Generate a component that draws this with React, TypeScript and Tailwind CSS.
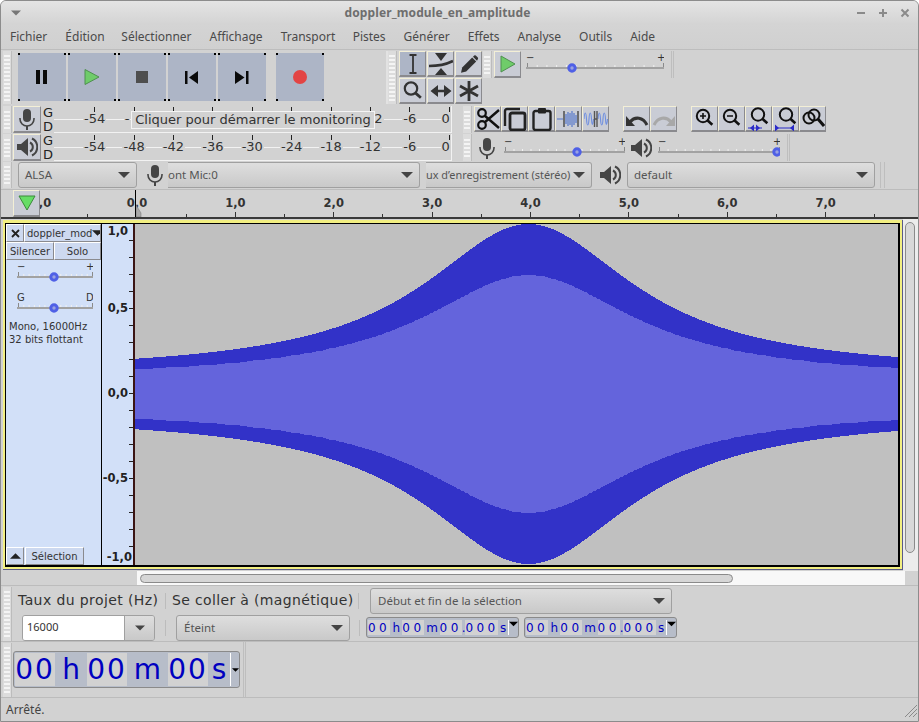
import React from "react";

const DJ = "font-['DejaVu_Sans',sans-serif]";

function Grip({ h, className = "" }: { h: number; className?: string }) {
  return (
    <div className={`w-[9px] shrink-0 flex flex-col justify-center gap-[2px] items-center bg-[#dcdcdc] border-r border-[#bcbcbc] overflow-hidden ${className}`} style={{ height: h }}>
      {Array.from({ length: Math.floor(h / 4) - 1 }).map((_, i) => (
        <div key={i} className="w-[6px] h-[2px] bg-[#f4f4f4]" />
      ))}
    </div>
  );
}

function Corners() {
  const c = "absolute w-[2px] h-[2px] bg-black";
  return (
    <>
      <span className={`${c} left-0 top-0`} />
      <span className={`${c} right-0 top-0`} />
      <span className={`${c} left-0 bottom-0`} />
      <span className={`${c} right-0 bottom-0`} />
    </>
  );
}

function BigBtn({ children, ml = "" }: { children: React.ReactNode; ml?: string }) {
  return (
    <div className={`relative w-[48px] h-[48px] shrink-0 bg-[#adb5c6] flex items-center justify-center ${ml}`}>
      <Corners />
      {children}
    </div>
  );
}

function ToolBtn({ children, active, w = 27, h = 26 }: { children: React.ReactNode; active?: boolean; w?: number; h?: number }) {
  return (
    <div
      className={`shrink-0 flex items-center justify-center border-t border-l border-b-2 border-r border-t-[#f3efd6] border-l-[#f3efd6] border-b-[#8a8a8e] border-r-[#8a8a8e] ${active ? "bg-[#adb5c6]" : "bg-[#c9ccd5]"}`}
      style={{ width: w, height: h }}
    >
      {children}
    </div>
  );
}

function Mic({ s = 22, c = "#454545" }: { s?: number; c?: string }) {
  return (
    <svg width={s} height={s} viewBox="0 0 22 22">
      <rect x="7" y="1" width="8" height="13" rx="4" fill={c} />
      <path d="M4 10v1a7 7 0 0 0 14 0v-1" fill="none" stroke={c} strokeWidth="1.6" />
      <path d="M11 18v4" stroke={c} strokeWidth="2" />
    </svg>
  );
}

function Speaker({ s = 20, c = "#454545" }: { s?: number; c?: string }) {
  return (
    <svg width={s} height={s} viewBox="0 0 22 22">
      <path d="M1 8h4l7-6v18l-7-6H1z" fill={c} />
      <path d="M14 6.5a5 5 0 0 1 0 9" fill="none" stroke={c} strokeWidth="2" />
      <path d="M16 2.5a9.5 9.5 0 0 1 0 17" fill="none" stroke={c} strokeWidth="2" />
    </svg>
  );
}

function Slider({ w, pos, left = "−", right = "+", color = "#333" }: { w: number; pos: number; left?: string; right?: string; color?: string }) {
  const ticks = Array.from({ length: 15 }).map((_, i) => 1 + ((w - 2) * i) / 14);
  return (
    <svg width={w} height={22} viewBox={`0 0 ${w} 22`} className="shrink-0">
      <text x="0" y="8" fontFamily="DejaVu Sans" fontSize="10" fill={color}>{left}</text>
      <text x={w - 7} y="8" fontFamily="DejaVu Sans" fontSize="10" fill={color}>{right}</text>
      {ticks.map((t, i) => (
        <rect key={i} x={t} y={i === 0 || i === 14 ? 10 : 12} width="1" height={i === 0 || i === 14 ? 4 : 2} fill={i === 0 || i === 14 ? "#8a8a8a" : "#f2f2f2"} />
      ))}
      <rect x="0" y="14" width={w} height="2" fill="#a2a2a2" />
      <circle cx={pos} cy="15" r="3.2" fill="#9aa2e0" stroke="#4f60e6" strokeWidth="3" />
    </svg>
  );
}

function Caret({ c = "#444", w = 12 }: { c?: string; w?: number }) {
  return (
    <svg width={w} height={6} viewBox="0 0 12 6" className="shrink-0">
      <path d="M0 0h12L6 6z" fill={c} />
    </svg>
  );
}

function Combo({ w, text, h = 26, cls = "", tx = 6 }: { w: number; text: string; h?: number; cls?: string; tx?: number }) {
  return (
    <div
      className={`shrink-0 flex items-center justify-between pr-[6px] border border-[#a0a0a0] rounded-[3px] bg-gradient-to-b from-[#dedede] to-[#c9c9c9] text-[#555] font-['Noto_Sans',sans-serif] overflow-hidden ${cls || ""} ${cls.includes("text-[") ? "" : "text-[11.5px]"}`}
      style={{ width: w, height: h, paddingLeft: tx }}
    >
      <span className="whitespace-nowrap">{text}</span>
      <Caret />
    </div>
  );
}

function MeterRow({ icon, mask }: { icon: React.ReactNode; mask?: boolean }) {
  const labels = mask
    ? ["-54", "-", "", "", "", "", "", "2", "-6", "0"]
    : ["-54", "-48", "-42", "-36", "-30", "-24", "-18", "-12", "-6", "0"];
  return (
    <div className="flex h-[27px] items-stretch pl-[2px]">
      <Grip h={27} />
      <div className="ml-[1px]">
        <ToolBtn w={28} h={27}>{icon}</ToolBtn>
      </div>
      <div className={`w-[13px] ml-[2px] flex flex-col text-[13px] leading-[13.5px] text-[#222] ${DJ}`}>
        <span>G</span>
        <span>D</span>
      </div>
      <div className="relative w-[398px] h-[27px] ml-[-2px]">
        <div className="absolute left-0 right-0 top-[13px] h-[1px] bg-[#f2f2f2]" />
        <div className="absolute left-0 right-0 top-[26px] h-[1px] bg-[#f2f2f2]" />
        <div className="absolute right-0 top-0 bottom-0 w-[1px] bg-[#f2f2f2]" />
        <div className={`relative flex ml-[21px] pt-[1px] text-[13px] text-[#333] ${DJ}`}>
          {labels.map((l, n) => (
            <div key={n} className="w-[39.4px] shrink-0 flex flex-col items-center">
              <span className="w-[1px] h-[5px] bg-[#222] shrink-0" />
              <span
                className={`leading-[14px] px-[1px] bg-[#d2d2d2] ${l === "0" ? "mr-[7px]" : ""} ${l === "-" ? "mr-[14px]" : ""} ${l === "2" ? "ml-[16px]" : ""}`}
              >
                {l}
              </span>
            </div>
          ))}
        </div>
        {mask && (
          <div className={`absolute left-[77px] top-[5px] w-[244px] h-[18px] bg-[#d2d2d2] border border-[#f4f4f4] text-[13px] leading-[16px] text-[#333] whitespace-nowrap text-center ${DJ}`}>
            Cliquer pour démarrer le monitoring
          </div>
        )}
      </div>
    </div>
  );
}

function Timer({ small, w }: { small?: boolean; w: number }) {
  const D = ({ t }: { t: string }) => (
    <span className={`bg-[#d2d2d2] flex items-center justify-center h-full ${small ? "w-[22px] tracking-[3.4px]" : "w-[40px] tracking-[2px]"}`}>{t}</span>
  );
  const U = ({ t, wd }: { t: string; wd: number }) => (
    <span className="flex items-end justify-center h-full" style={{ width: wd }}>{t}</span>
  );
  return (
    <div
      className={`flex items-stretch shrink-0 bg-[#b7bdc9] border border-[#8a8a8a] rounded-[3px] text-[#0000c0] overflow-hidden ${DJ} ${small ? "h-[21px] text-[12px] leading-[14px] py-[2px] pl-[1px]" : "h-[37px] text-[28px] leading-[32px] py-[1px] pl-[1px]"}`}
      style={{ width: w }}
    >
      {small ? (
        <>
          <D t="00" /><U t="h" wd={13} /><D t="00" /><U t="m" wd={16} /><D t="00" />
          <span className="flex items-center justify-center w-[4px]">.</span>
          <span className="bg-[#d2d2d2] flex items-center justify-center w-[33px] tracking-[3.4px]">000</span>
          <U t="s" wd={10} />
        </>
      ) : (
        <>
          <D t="00" /><U t="h" wd={32} /><D t="00" /><U t="m" wd={41} /><D t="00" /><U t="s" wd={22} />
        </>
      )}
      <span className={`flex-1 bg-[#b7bdc9] border-l border-white flex justify-center ${small ? "pt-[1px]" : "pt-[14px]"}`}>
        <Caret c="#000" w={small ? 9 : 7} />
      </span>
    </div>
  );
}

function Ic({ children }: { children: React.ReactNode }) {
  return <svg width="24" height="24" viewBox="0 0 24 24" fill="none">{children}</svg>;
}

function Lens({ cx = 10, cy = 9, r = 6, c = "#111", sw = 2, hl = 5 }: { cx?: number; cy?: number; r?: number; c?: string; sw?: number; hl?: number }) {
  return (
    <>
      <circle cx={cx} cy={cy} r={r} stroke={c} strokeWidth={sw} />
      <path d={`M${cx + r * 0.7} ${cy + r * 0.7}L${cx + r * 0.7 + hl} ${cy + r * 0.7 + hl * 0.9}`} stroke={c} strokeWidth={sw + 0.6} />
    </>
  );
}

function wavePaths() {
  const W = 763, cy = 170;
  const xs: number[] = [];
  for (let x = 0; x <= W; x += 1) xs.push(x);
  const outer = (x: number) => {
    const dt = (x - 393) / 98.4;
    return Math.round(21 + 149 / (1 + (dt / 1.3) ** 2));
  };
  const inner = (x: number) => Math.round(outer(x) * 0.7);
  const mk = (f: (x: number) => number) =>
    "M" + xs.map((x) => `${x} ${cy - f(x)}`).join("L") + "L" + xs.slice().reverse().map((x) => `${x} ${cy + f(x)}`).join("L") + "Z";
  return { o: mk(outer), i: mk(inner) };
}

const panelBtn = "bg-[#cdd9f0] border border-t-white border-l-white border-b-[#8a8a8e] border-r-[#8a8a8e]";

export default function App() {
  const { o, i } = wavePaths();
  const rulerCells = Array.from({ length: 18 }).map((_, n) => (n % 2 === 0 ? String(n / 2 - 1) + ",0" : ""));
  const axis = Array.from({ length: 20 }).map((_, k) =>
    k === 0 ? "1,0" : k === 4 ? "0,5" : k === 9 ? "0,0" : k === 14 ? "-0,5" : k === 19 ? "-1,0" : ""
  );
  const menu: [string, string][] = [
    ["Fichier", ""], ["Édition", "w-[38px]"], ["Sélectionner", ""], ["Affichage", ""], ["Transport", "w-[54px]"],
    ["Pistes", ""], ["Générer", ""], ["Effets", ""], ["Analyse", ""], ["Outils", ""], ["Aide", ""],
  ];
  return (
    <div className="w-[919px] h-[722px] bg-[#d2d2d2] flex flex-col overflow-hidden rounded-t-[6px] border border-[#8c8c8c] font-['Noto_Sans',sans-serif]">
      {/* Title */}
      <div className="h-[23px] shrink-0 flex items-center justify-between pl-[10px] pr-[8px] bg-gradient-to-b from-[#e4e4e4] to-[#d4d4d4]">
        <Caret c="#777" w={10} />
        <span className="text-[12px] font-bold text-[#6e6e6e] tracking-[0.12px] mr-[2px]">doppler_module_en_amplitude</span>
        <div className="flex gap-[12px] items-center">
          <svg width="10" height="10" viewBox="0 0 10 10"><rect x="1" y="4" width="8" height="2" fill="#8a8a8a" /></svg>
          <svg width="10" height="10" viewBox="0 0 10 10"><path d="M1 4h3V1h2v3h3v2H6v3H4V6H1z" fill="#8a8a8a" /></svg>
          <svg width="10" height="10" viewBox="0 0 10 10"><path d="M1.5 1.5l7 7M8.5 1.5l-7 7" stroke="#8a8a8a" strokeWidth="2" /></svg>
        </div>
      </div>
      {/* Menu */}
      <div className="h-[26px] shrink-0 flex items-center pl-[9px] gap-[18px] text-[12px] text-[#4a4a4a] bg-gradient-to-b from-[#d4d4d4] to-[#d0d0d0] border-b border-[#bdbdbd]">
        {menu.map(([m, c]) => (
          <span key={m} className={`whitespace-nowrap ${c}`}>{m}</span>
        ))}
      </div>
      {/* Row 1 */}
      <div className="h-[55px] shrink-0 flex items-start pl-[2px] pt-[1px]">
        <Grip h={53} />
        <div className="flex w-[376px] h-[53px] gap-[2px] pl-[6px] pt-[2px] border-r-2 border-[#e2e2e2] shrink-0">
          <BigBtn><svg width="14" height="14" viewBox="0 0 14 14"><rect x="1" y="0" width="4" height="14" fill="#0a0a0a" /><rect x="8" y="0" width="4" height="14" fill="#0a0a0a" /></svg></BigBtn>
          <BigBtn><svg width="16" height="16" viewBox="0 0 16 16"><path d="M1 0.5L15 8L1 15.5z" fill="#6fcc6a" stroke="#4f8f50" /></svg></BigBtn>
          <BigBtn><div className="w-[12px] h-[12px] bg-[#4e4e4e]" /></BigBtn>
          <BigBtn><svg width="14" height="13" viewBox="0 0 14 13"><rect x="0" y="0" width="2.5" height="13" fill="#0a0a0a" /><path d="M13 0v13L4 6.5z" fill="#0a0a0a" /></svg></BigBtn>
          <BigBtn><svg width="14" height="13" viewBox="0 0 14 13"><rect x="11" y="0" width="2.5" height="13" fill="#0a0a0a" /><path d="M0 0v13L9.5 6.5z" fill="#0a0a0a" /></svg></BigBtn>
          <BigBtn ml="ml-[8px]"><div className="w-[14px] h-[14px] rounded-full bg-[#e34444]" /></BigBtn>
        </div>
        <Grip h={53} />
        <div className="grid grid-cols-[27px_27px_27px] gap-[1px] w-[83px] shrink-0 ml-[2px]">
          <ToolBtn active>
            <Ic><path d="M8.5 3h7M8.5 21h7M12 3v18" stroke="#333" strokeWidth="1.8" /></Ic>
          </ToolBtn>
          <ToolBtn>
            <Ic><path d="M6 1h12l-6 8zM6 23h12l-6-7z" fill="#333" /><path d="M0 14c8 0 16-1 24-5" stroke="#333" strokeWidth="2.6" /></Ic>
          </ToolBtn>
          <ToolBtn>
            <Ic>
              <g transform="translate(2.4 2.4) scale(0.8)">
                <path d="M2 23l1.5-6.5L16 4l5 5L8.5 21.5z" fill="#333" />
                <path d="M17 3l1.5-1.5a1.5 1.5 0 0 1 2 0l2.5 2.5a1.5 1.5 0 0 1 0 2L22 8z" fill="#333" />
              </g>
            </Ic>
          </ToolBtn>
          <ToolBtn>
            <Ic><Lens cx={10} cy={9.5} r={6.2} c="#333" sw={2.2} hl={5.5} /></Ic>
          </ToolBtn>
          <ToolBtn>
            <Ic><path d="M6 12h12" stroke="#333" strokeWidth="2.6" /><path d="M9 6l-7.5 6 7.5 6zM15 6l7.5 6-7.5 6z" fill="#333" /></Ic>
          </ToolBtn>
          <ToolBtn>
            <Ic><path d="M12 2v20M3 7l18 10M21 7L3 17" stroke="#333" strokeWidth="2.8" /></Ic>
          </ToolBtn>
        </div>
        <Grip h={27} className="ml-[1px]" />
        <div className="ml-[2px]">
          <ToolBtn h={27}><svg width="18" height="18" viewBox="0 0 18 18"><path d="M2 1L16 9L2 17z" fill="#6fcc6a" stroke="#4f8f50" /></svg></ToolBtn>
        </div>
        <div className="ml-[5px] mt-[2px]">
          <Slider w={138} pos={46} />
        </div>
        <div className="ml-[7px] w-[3px] h-[27px] border-x border-[#bebebe]" />
      </div>
      {/* Row 2, 3 */}
      <div className="h-[56px] shrink-0 flex pt-[1px]">
        <div className="w-[462px] shrink-0 flex flex-col gap-[1px]">
          <MeterRow mask icon={<Mic />} />
          <MeterRow icon={<Speaker s={22} />} />
        </div>
        <div className="flex flex-col gap-[1px]">
          <div className="flex h-[27px] items-start">
            <Grip h={27} />
            <div className="w-[2px]" />
            <ToolBtn>
              <Ic>
                <circle cx="6" cy="6" r="3.8" stroke="#111" strokeWidth="2.2" />
                <circle cx="6" cy="18" r="3.8" stroke="#111" strokeWidth="2.2" />
                <path d="M8.5 8.5L23 21M8.5 15.5L23 3" stroke="#111" strokeWidth="2.4" />
              </Ic>
            </ToolBtn>
            <ToolBtn>
              <Ic>
                <path d="M17 2H4a2 2 0 0 0-2 2v15" stroke="#222" strokeWidth="2.4" />
                <rect x="7" y="6" width="15" height="17" rx="2" stroke="#222" strokeWidth="2.8" />
              </Ic>
            </ToolBtn>
            <ToolBtn>
              <Ic>
                <rect x="3.5" y="4" width="17" height="19" rx="2" stroke="#222" strokeWidth="2.4" />
                <rect x="8" y="1" width="8" height="5.5" rx="1" fill="#222" />
              </Ic>
            </ToolBtn>
            <ToolBtn>
              <Ic>
                <path d="M0 12h6" stroke="#5577cc" strokeWidth="1.2" />
                <path d="M9 7v10M11 5v14M13 6v12M15 4v16M17 6v12M19 8v8" stroke="#5577cc" strokeWidth="1.2" />
                <path d="M7 4v16M21 4v16" stroke="#555" strokeWidth="1.6" />
              </Ic>
            </ToolBtn>
            <ToolBtn>
              <Ic>
                <path d="M0 12c.7-8 2-8 2.5 0s2 8 2.5 0 2-8 2.5 0 1.5 6 2 0" stroke="#6f8fe0" strokeWidth="1.1" />
                <path d="M14 12c.7-8 2-8 2.5 0s2 8 2.5 0 2-8 2.5 0 1.5 6 2 0" stroke="#6f8fe0" strokeWidth="1.1" />
                <path d="M10.5 4v16M13 4v16" stroke="#555" strokeWidth="1.4" />
                <path d="M10.5 12H13" stroke="#555" strokeWidth="1.4" />
              </Ic>
            </ToolBtn>
            <div className="w-[14px]" />
            <ToolBtn>
              <Ic>
                <path d="M5 15c5-6 13-5 17 3" stroke="#333" strokeWidth="3" />
                <path d="M1 9v10h9z" fill="#333" />
              </Ic>
            </ToolBtn>
            <ToolBtn>
              <Ic>
                <path d="M19 15c-5-6-13-5-17 3" stroke="#a8a8a8" strokeWidth="3" />
                <path d="M23 9v10h-9z" fill="#a8a8a8" />
              </Ic>
            </ToolBtn>
            <div className="w-[14px]" />
            <ToolBtn>
              <Ic><Lens cx={10} cy={9} r={6.2} /><path d="M7 9h6M10 6v6" stroke="#111" strokeWidth="1.6" /></Ic>
            </ToolBtn>
            <ToolBtn>
              <Ic><Lens cx={10} cy={9} r={6.2} /><path d="M7 9h6" stroke="#111" strokeWidth="1.6" /></Ic>
            </ToolBtn>
            <ToolBtn>
              <Ic><Lens cx={11} cy={7.5} r={6.2} /><path d="M1 21h14" stroke="#2b2bc8" strokeWidth="1.2" /><path d="M7 17.5v7l-4-3.5zM9 17.5v7l4-3.5z" fill="#2b2bc8" /></Ic>
            </ToolBtn>
            <ToolBtn>
              <Ic><Lens cx={12} cy={7.5} r={6.2} /><path d="M3 21h15" stroke="#2b2bc8" strokeWidth="1.2" /><path d="M1 17.5v7l4-3.5zM20 17.5v7l-4-3.5z" fill="#2b2bc8" /></Ic>
            </ToolBtn>
            <ToolBtn>
              <Ic><circle cx="8" cy="11" r="5.5" stroke="#111" strokeWidth="2" /><circle cx="13" cy="8" r="5.5" stroke="#111" strokeWidth="2" /><path d="M17 12l6 7" stroke="#111" strokeWidth="3" /></Ic>
            </ToolBtn>
          </div>
          <div className="flex h-[27px] items-center">
            <Grip h={27} />
            <div className="ml-[4px]"><Mic s={22} /></div>
            <div className="ml-[6px]"><Slider w={121} pos={73} /></div>
            <div className="ml-[5px]"><Speaker s={22} /></div>
            <div className="ml-[6px]"><Slider w={122} pos={119} /></div>
            <div className="ml-[7px] w-[3px] h-[27px] border-x border-[#bebebe]" />
          </div>
        </div>
      </div>
      {/* Devices */}
      <div className="h-[29px] shrink-0 flex items-center pl-[2px] border-b border-[#bcbcbc]">
        <Grip h={26} />
        <Combo w={119} text="ALSA" cls="ml-[6px]" />
        <div className="w-[36px] flex justify-center shrink-0"><Mic /></div>
        <Combo w={252} text="ont Mic:0" tx={0} cls="rounded-l-none border-l-0 -ml-[5px]" />
        <div className="w-[6px] shrink-0" />
        <Combo w={166} text="ux d’enregistrement (stéréo)" tx={0} cls="rounded-l-none border-l-0 text-[10.9px]" />
        <div className="w-[35px] flex justify-center shrink-0"><Speaker s={22} /></div>
        <Combo w={248} text="default" />
        <div className="ml-[5px] w-[5px] h-[26px] border-x border-[#bebebe]" />
      </div>
      {/* Ruler */}
      <div className={`relative h-[29px] shrink-0 flex overflow-hidden border-b-2 border-[#3a3a3a] ${DJ}`}>
        <div className="w-[12px] shrink-0 relative z-10 bg-[#d2d2d2]" />
        <div className="relative z-10 shrink-0">
          <ToolBtn w={27} h={27}>
            <svg width="18" height="16" viewBox="0 0 18 16"><path d="M1 1h16L9 15z" fill="#66dd66" stroke="#3a8a3a" /></svg>
          </ToolBtn>
        </div>
        <div className="flex ml-[-26px] shrink-0">
          {rulerCells.map((l, n) => (
            <div key={n} className="w-[49.2px] shrink-0 flex flex-col items-center justify-end h-[27px]">
              {l && <span className="text-[11.5px] font-bold text-[#333] leading-[14px] mb-[2px]">{l}</span>}
              <span className={`w-[1px] bg-[#333] ${l ? "h-[5px]" : "h-[3px]"}`} />
            </div>
          ))}
        </div>
        <div className="absolute left-[134px] top-0 bottom-0 w-[1px] bg-black" />
        <svg className="absolute left-[135px] top-[14px]" width="6" height="13" viewBox="0 0 6 13"><path d="M0 1l5 8v4H0z" fill="#a8a8a8" stroke="#777" strokeWidth="0.5" /></svg>
      </div>
      {/* Track area */}
      <div className="h-[352px] shrink-0 flex items-start pl-[2px]">
        <div className="w-[900px] h-[350px] shrink-0 mt-[1px] border-r border-b border-[#5a5a88]">
          <div className="w-full h-full border-x-2 border-b-2 border-t-[3px] border-[#f2ef82]">
            <div className={`w-full h-full flex border-l border-t border-r-2 border-b-2 border-black ${DJ}`}>
              {/* panel */}
              <div className="w-[96px] shrink-0 bg-[#d2e0f8] flex flex-col border-r border-black text-[#333]">
                <div className="flex h-[18px] text-[10px]">
                  <div className={`w-[18px] shrink-0 flex items-center justify-center ${panelBtn}`}>
                    <svg width="9" height="9" viewBox="0 0 9 9"><path d="M1 1l7 7M8 1l-7 7" stroke="#222" strokeWidth="1.8" /></svg>
                  </div>
                  <div className={`flex-1 flex items-center justify-between overflow-hidden pl-[2px] ${panelBtn}`}>
                    <span className="whitespace-nowrap">doppler_mod</span>
                    <Caret c="#222" w={11} />
                  </div>
                </div>
                <div className="flex h-[18px] text-[10px]">
                  <div className={`w-[48px] shrink-0 flex items-center justify-center ${panelBtn}`}>Silencer</div>
                  <div className={`flex-1 flex items-center justify-center ${panelBtn}`}>Solo</div>
                </div>
                <div className="pl-[11px] mt-[2px]"><Slider w={76} pos={37} /></div>
                <div className="pl-[11px] mt-[9px]"><Slider w={76} pos={37} left="G" right="D" /></div>
                <div className="pl-[3px] mt-[5px] text-[10px] leading-[13px]">
                  <div>Mono, 16000Hz</div>
                  <div>32 bits flottant</div>
                </div>
                <div className="flex-1" />
                <div className="flex h-[18px] text-[10px]">
                  <div className={`w-[18px] flex items-center justify-center ${panelBtn}`}>
                    <svg width="11" height="6" viewBox="0 0 12 6"><path d="M0 6h12L6 0z" fill="#222" /></svg>
                  </div>
                  <div className={`w-[59px] ml-[1px] flex items-center justify-center ${panelBtn}`}>Sélection</div>
                </div>
              </div>
              {/* vertical ruler */}
              <div className="w-[33px] shrink-0 bg-[#d2e0f8] border-r-2 border-[#3a1414] flex flex-col text-[11.5px] font-bold text-[#222]">
                {axis.map((l, k) => (
                  <div
                    key={k}
                    className={`h-[17px] shrink-0 flex justify-end ${k === 0 || k === 19 ? "items-center" : "items-end"}`}
                  >
                    {l && (
                      <span className={`leading-[12px] mr-[1px] ${k === 0 ? "mb-[3px]" : k === 19 ? "mt-[3px]" : "mb-[-5px]"}`}>{l}</span>
                    )}
                    {k !== 19 && <span className={`w-[4px] h-[1px] bg-[#222] ${k === 0 ? "self-end" : ""}`} />}
                  </div>
                ))}
              </div>
              {/* wave */}
              <div className="flex-1 bg-[#c0c0c0] overflow-hidden">
                <svg width="763" height="341" viewBox="0 0 763 341" className="block" shapeRendering="crispEdges">
                  <path d={o} fill="#3232c8" />
                  <path d={i} fill="#6464dc" />
                </svg>
              </div>
            </div>
          </div>
        </div>
        <div className="w-[16px] h-[352px] bg-[#ececec] pl-[2px] pt-[3px]">
          <div className="w-[10px] h-[331px] bg-[#d8d8d8] border border-[#8a8a8a] rounded-full" />
        </div>
      </div>
      {/* H scroll */}
      <div className="h-[15px] shrink-0 flex items-center border-b border-[#bcbcbc]">
        <div className="w-[136px] shrink-0 self-stretch" />
        <div className="w-[768px] shrink-0 self-stretch bg-[#f8f8f8] flex items-center pl-[3px]">
          <div className="w-[593px] h-[9px] bg-[#d6d6d6] border border-[#8a8a8a] rounded-full" />
        </div>
      </div>
      {/* Selection toolbar */}
      <div className={`h-[56px] shrink-0 flex pl-[2px] border-b border-[#bcbcbc] items-start pt-[1px] ${DJ}`}>
        <Grip h={54} />
        <div className="flex flex-col shrink-0">
          <div className="h-[27px] flex items-center">
            <span className="ml-[6px] w-[147px] text-[14px] text-[#333] whitespace-nowrap tracking-[0.4px]">Taux du projet (Hz)</span>
            <div className="w-[1px] h-[16px] bg-[#bcbcbc]" />
            <span className="ml-[6px] w-[186px] text-[14px] text-[#333] whitespace-nowrap tracking-[0.35px]">Se coller à (magnétique)</span>
            <div className="w-[1px] h-[16px] bg-[#bcbcbc]" />
            <Combo w={302} h={26} text="Début et fin de la sélection" cls="ml-[11px]" tx={7} />
          </div>
          <div className="h-[27px] flex items-center">
            <div className="ml-[10px] w-[133px] h-[26px] flex border border-[#a0a0a0] rounded-[3px] overflow-hidden shrink-0 font-['Noto_Sans',sans-serif]">
              <div className="w-[101px] bg-white pl-[4px] text-[11px] text-[#333] flex items-center">16000</div>
              <div className="flex-1 bg-gradient-to-b from-[#dedede] to-[#c9c9c9] border-l border-[#a0a0a0] flex items-center justify-center"><Caret w={10} /></div>
            </div>
            <div className="w-[1px] h-[16px] bg-[#bcbcbc] ml-[10px]" />
            <Combo w={174} h={26} text="Éteint" cls="ml-[10px]" tx={7} />
            <div className="w-[1px] h-[16px] bg-[#bcbcbc] ml-[9px]" />
            <div className="flex gap-[5px] ml-[6px]">
              <Timer small w={153} />
              <Timer small w={153} />
            </div>
          </div>
        </div>
      </div>
      {/* Time */}
      <div className="h-[56px] shrink-0 flex pl-[2px] border-b border-[#bcbcbc] items-center">
        <Grip h={54} />
        <div className="w-[1px]" />
        <Timer w={227} />
        <div className="ml-[3px] w-[3px] self-stretch border-x border-[#bebebe]" />
      </div>
      {/* Status */}
      <div className="flex-1 flex items-center justify-between pl-[5px] text-[12px] text-[#444]">
        <span>Arrêté.</span>
        <svg width="16" height="16" viewBox="0 0 16 16"><path d="M15 3L3 15M15 7L7 15M15 11l-4 4" stroke="#8a8a8a" strokeWidth="1" /></svg>
      </div>
    </div>
  );
}
